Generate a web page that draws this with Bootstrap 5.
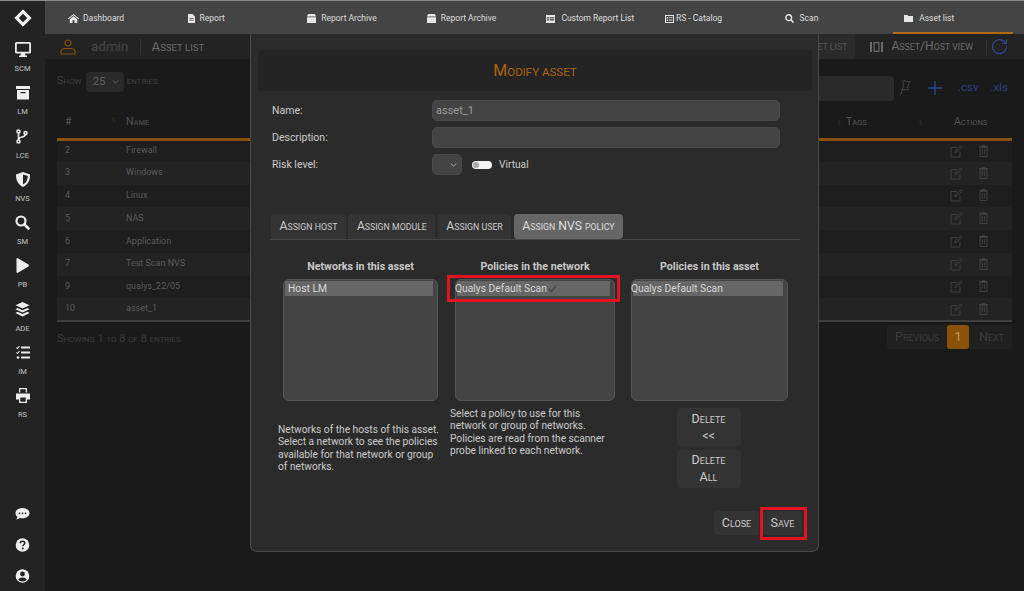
<!DOCTYPE html>
<html lang="en"><head><meta charset="utf-8"><title>Asset list</title>
<link href="https://cdn.jsdelivr.net/npm/bootstrap@5.3.0/dist/css/bootstrap.min.css" rel="stylesheet">
<style>
html,body{height:591px;overflow:hidden}
body{background:#1a1a1a;font-family:Roboto,"Liberation Sans",sans-serif;font-size:9px;color:#5a5a5a}
svg{display:block}
.sc{font-size:.72em;text-transform:uppercase}
.app{height:591px;position:relative;border-top:1px solid #8a8a8a}
.rail{width:45px;flex:none;background:#232323;color:#e8e8e8;height:590px;padding-top:2px}
.rail-logo{height:30px}
.rail-item{height:43.3px;font-size:7.5px;color:#c4c4c4;line-height:1;padding-top:9px;gap:8px;flex:none}
.rail-low{margin-top:auto;gap:11px;padding-bottom:5px}
.rail-low svg{width:15px;height:20px}
.topbar{height:33px;background:#444;display:grid;grid-template-columns:repeat(8,119.6px);padding-left:11px}
.tabitem{color:#dedede;font-size:8.5px;gap:6px;padding-left:12px;padding-top:4px;height:33px;border-bottom:2px solid transparent}
.tabitem.now{border-bottom-color:#b4690e}
.subbar{height:25px;background:#232323;padding:0 16px 0 15px}
.who{font-size:13.5px;color:#484848;margin-left:15px;padding-right:11px;border-right:1px solid #333;line-height:17px}
.crumb{font-size:13.3px;color:#6a6a6a;margin-left:11px}
.viewtab{margin-left:auto;background:#2a2a2a;height:25px;padding:0 8px;font-size:12.2px;color:#555}
.viewtab2{font-size:12.2px;color:#6b6b6b;gap:8px;margin-left:15px;padding-right:13px;border-right:1px solid #333;height:16px}
.pad{padding:0 12px}
.lenrow{height:53px;font-size:11px;color:#3f3f3f;gap:3px;padding-bottom:8px}
.lenbox{width:38px;height:20px;background:#2a2a2a;border-radius:4px;color:#5c5c5c;font-size:11.5px;padding:0 5px 0 7px;margin-left:1px}
.searchbar{margin-left:auto;color:#26417f;font-size:11.5px;padding-right:4px;margin-top:13px}
.fakeinput{width:90px;height:25px;background:#2a2a2a;border-radius:4px}
.grid-tbl{--bs-table-bg:transparent;--bs-table-color:#5a5a5a;--bs-table-striped-bg:#232323;--bs-table-striped-color:#5a5a5a;color:#5a5a5a;font-size:9px;margin:0;table-layout:fixed;width:955px;border-bottom:2px solid #3e3e3e}
.grid-tbl th{height:27px;padding:0 0 5px 8px;vertical-align:middle;font-weight:400;font-size:10.5px;color:#555;border-bottom:3px solid #8a5209;background:transparent;white-space:nowrap}
.grid-tbl td{height:22.75px;padding:0 0 0 8px;vertical-align:middle;border:0}
.grid-tbl tbody tr:nth-child(even) td{background:#232323}
.grid-tbl tbody tr:nth-child(odd) td{background:#1e1e1e}
.sortmark{display:inline-block;font-size:8px;color:#343434;letter-spacing:-3px;text-align:center}
.acts{gap:16px;color:#3f3f3f;margin-left:33px}
.foot{font-size:11px;color:#3a3a3a;padding-top:9px}
.pager{font-size:12.5px;color:#3c3c3c;background:#202020;height:24px;border-radius:3px;margin-top:3px;width:125px}
.pager span.lnk{padding:0 8px 0 8px;line-height:24px}
.pager .lnk.nx{padding-left:10px}
.pager .on{background:#8a5209;color:#c49a60;border-radius:3px;width:23px;text-align:center;line-height:24px;font-size:12px}
.dlg{position:absolute;left:250px;top:33px;width:569px;height:518px;background:#2b2b2b;border:1px solid #4a4a4a;border-top:0;border-radius:0 0 7px 7px;padding:16px 6px 0 7px;color:#ccc;font-size:10.5px}
.dlg-head{height:41px;background:#242424;border-radius:4px;color:#a8640f;font-size:16px;line-height:41px;text-align:center;margin-bottom:9px}
.frow{margin:0 0 6px 14px;height:21px}
.flabel{width:160px;flex:none;color:#ccc;font-size:10.5px}
.finput.form-control{width:348px;height:21px;min-height:0;padding:0 3px;background:#444;border:1px solid #4a4a4a;border-radius:5px;color:#999;font-size:11px;box-shadow:none}
.fsel{width:30px;height:21px;background:#444;border:1px solid #4a4a4a;border-radius:5px;padding-left:17px}
.sw{width:20px;height:8px;background:#f2f2f2;border-radius:4px;margin-left:10px;padding-left:1px}
.sw i{display:block;width:6px;height:6px;border-radius:50%;background:#aaa}
.virt{margin-left:7px;font-size:10.2px}
.dlg-tabs.nav-tabs{--bs-nav-tabs-border-color:#484848;--bs-nav-tabs-border-width:1px;margin:39px 12px 0 12px;padding-left:1px;gap:2.5px;border-bottom:1px solid #484848;height:26px;flex-wrap:nowrap}
.dlg-tabs .nav-link{background:#333;color:#ccc;border:0;border-radius:4px 4px 0 0;height:25px;padding:0 8.500px;line-height:25px;font-size:12.2px;margin:0;white-space:nowrap}
.dlg-tabs .nav-link.active{background:#666;color:#ddd;border-radius:4px}
.cols{margin:20px 0 0 0;display:grid;grid-template-columns:155px 160px 156px;column-gap:17px;padding-left:25px}
.coltitle{font-weight:700;font-size:10.7px;text-align:center;color:#c8c8c8;height:13px;line-height:13px;margin-bottom:6px;white-space:nowrap}
.lbox{height:122px;background:#444;border:1px solid #555;border-radius:6px;padding:1px;display:block}
.lbox .list-group-item{background:#666;border:0;border-radius:0;color:#d8d8d8;padding:0 3px;font-size:10.3px;line-height:15px;height:15px;margin-right:3px;white-space:nowrap}
.lbox .flush{padding-left:0;text-indent:-2px}
.tick{display:inline-block;vertical-align:-1px;margin-left:1px;text-indent:0}
.col3{margin-left:-1px}
.help{font-size:10.2px;line-height:12.3px;color:#ccc;white-space:nowrap}
.help1{margin:23px 0 0 -5px}
.help2{margin:7px 0 0 -5px}
.delbox{gap:4px;margin:7px 2px 0 0}
.gbtn.btn{background:#333;border:0;color:#ccc;font-size:12.5px;border-radius:4px;padding:0;line-height:15px;--bs-btn-hover-bg:#333;--bs-btn-hover-color:#ccc}
.delbtn{width:64px;height:38px}
.actrow{position:absolute;right:17px;bottom:16px;gap:4px}
.cl{width:45px;height:24px}
.sv{width:39px;height:24px;margin-right:-1px}
.redmark{position:absolute;border:3px solid #e0141e;pointer-events:none}
.rm1{left:196px;top:241px;width:173px;height:27px}
.rm2{left:509px;top:473px;width:47px;height:33px}
</style></head><body>
<svg width="0" height="0" style="position:absolute"><defs>
<symbol id="ed" viewBox="0 0 13 13"><path d="M10 6.500V12H1V2.500h6M5 7.500l.5-2L11 .8l1.300 1.300L6.800 7Z" fill="none" stroke="currentColor"/></symbol>
<symbol id="tr" viewBox="0 0 9 12"><path d="M1 2.500h7V11.500H1ZM0 1.500h9M3 1V.5h3V1M3.300 4v5.500M5.700 4v5.500" fill="none" stroke="currentColor"/></symbol>
</defs></svg>
<div class="app d-flex">
  <nav class="rail d-flex flex-column align-items-center">
    <div class="rail-logo d-flex align-items-center justify-content-center"><svg width="18" height="18" viewBox="0 0 18 18"><path d="M9 .8 17.200 9 9 17.200.8 9Z" fill="#f0f0f0" stroke="#f0f0f0" stroke-linejoin="round"/><path d="M9 4.800 13.200 9 9 13.200 4.800 9Z" fill="#232323"/></svg></div>
    <div class="rail-item d-flex flex-column align-items-center"><svg width="16" height="15" viewBox="0 0 16 15"><path d="M1.500 0h13A1.500 1.500 0 0 1 16 1.500v8.500a1.500 1.500 0 0 1-1.500 1.500H10l.5 2H12v1.500H4V13.500h1.500l.5-2H1.500A1.500 1.500 0 0 1 0 10V1.500A1.500 1.500 0 0 1 1.500 0Zm.3 1.800v7.900h12.400V1.800Z" fill="#eee" fill-rule="evenodd"/></svg><span>SCM</span></div>
    <div class="rail-item d-flex flex-column align-items-center"><svg width="14" height="15" viewBox="0 0 14 15"><path d="M0 1h14v3H0ZM1 5h12v9.500H1Zm3.500 2v1.300h5V7Z" fill="#eee" fill-rule="evenodd"/></svg><span>LM</span></div>
    <div class="rail-item d-flex flex-column align-items-center"><svg width="12" height="15" viewBox="0 0 12 15"><g fill="none" stroke="#eee" stroke-width="1.600"><circle cx="2.500" cy="2.500" r="1.500"/><circle cx="2.500" cy="12.500" r="1.500"/><circle cx="9.500" cy="4" r="1.500"/><path d="M2.500 4v7M9.500 5.500c0 3-7 2-7 5"/></g></svg><span>LCE</span></div>
    <div class="rail-item d-flex flex-column align-items-center"><svg width="14" height="15" viewBox="0 0 14 15"><path d="M7 0 14 2.500c0 6-2 10-7 12.500C2 12.500 0 8.500 0 2.500Z" fill="#eee"/><path d="M7 2.400 11.800 4c-.2 4-1.400 6.800-4.800 8.600Z" fill="#232323"/></svg><span>NVS</span></div>
    <div class="rail-item d-flex flex-column align-items-center"><svg width="15" height="15" viewBox="0 0 15 15"><circle cx="6" cy="6" r="4.500" fill="none" stroke="#eee" stroke-width="2.200"/><path d="m9.500 9.500 4 4" stroke="#eee" stroke-width="2.600" stroke-linecap="round"/></svg><span>SM</span></div>
    <div class="rail-item d-flex flex-column align-items-center"><svg width="13" height="15" viewBox="0 0 13 15"><path d="M.5 1v13c0 .8.700 1.100 1.300.8L12.500 8.400c.6-.4.600-1.400 0-1.800L1.800.2C1.200-.1.500.2.500 1Z" fill="#eee"/></svg><span>PB</span></div>
    <div class="rail-item d-flex flex-column align-items-center"><svg width="15" height="15" viewBox="0 0 15 15"><path d="M7.500 0 14.500 3.300 7.500 6.600.5 3.300Z" fill="#eee"/><path d="M2.500 6 7.500 8.300 12.500 6l2 1.200-7 3.300-7-3.300ZM2.500 9.800l5 2.300 5-2.300 2 1.200-7 3.500-7-3.500Z" fill="#eee"/></svg><span>ADE</span></div>
    <div class="rail-item d-flex flex-column align-items-center"><svg width="14" height="15" viewBox="0 0 14 15"><path d="M5 2.500h9M5 7.500h9M5 12.500h9" stroke="#eee" stroke-width="2"/><path d="m.5 2.500 1 1L3.500 1M.5 7.500l1 1 2-2.500" stroke="#eee" stroke-width="1.100" fill="none"/><circle cx="2" cy="12.500" r="1.300" fill="#eee"/></svg><span>IM</span></div>
    <div class="rail-item d-flex flex-column align-items-center"><svg width="14" height="15" viewBox="0 0 14 15"><path d="M3 0h8v4.500H9.800V1.300H4.200v3.200H3ZM0 5.500h14v6h-3v3.500H3v-3.500H0Zm4.300 4v4.200h5.400V9.500Z" fill="#eee" fill-rule="evenodd"/></svg><span>RS</span></div>
    <div class="rail-low d-flex flex-column align-items-center">
      <svg viewBox="0 0 15 20"><path d="M7.500 4C3.400 4 .5 6.300.5 9.200c0 1.500.8 2.800 2 3.700-.2 1-.8 1.700-1.500 2.300 1.400 0 2.900-.6 3.800-1.300.8.200 1.700.3 2.700.3 4.100 0 7-2.200 7-5S11.600 4 7.500 4Z" fill="#eee"/><circle cx="4.500" cy="9.300" r=".9" fill="#232323"/><circle cx="7.500" cy="9.300" r=".9" fill="#232323"/><circle cx="10.500" cy="9.300" r=".9" fill="#232323"/></svg>
      <svg viewBox="0 0 15 20"><circle cx="7.500" cy="10" r="6.800" fill="#eee"/><path d="M5.300 8.200c0-1.300 1-2 2.300-2s2.200.8 2.200 1.900c0 1.700-2 1.600-2 3.200" fill="none" stroke="#232323" stroke-width="1.500"/><circle cx="7.700" cy="13.500" r="1" fill="#232323"/></svg>
      <svg viewBox="0 0 15 20"><circle cx="7.500" cy="10" r="6.800" fill="#eee"/><circle cx="7.500" cy="8" r="2.400" fill="#232323"/><path d="M3.300 13.800c.7-1.600 2.300-2.400 4.200-2.400s3.500.8 4.200 2.400c-1 1-2.500 1.700-4.200 1.700s-3.200-.7-4.200-1.700Z" fill="#232323"/></svg>
    </div>
  </nav>
  <main class="flex-grow-1 d-flex flex-column" style="min-width:0">
    <div class="topbar">
      <div class="tabitem d-flex align-items-center" style="gap:4px"><svg width="11" height="9" viewBox="0 0 11 9"><path d="M5.500 0 11 4.600l-.6.700L5.500 1.300.6 5.300 0 4.600ZM1.800 5.200 5.500 2.200l3.700 3V9H6.500V6.300h-2V9H1.800Z" fill="#e6e6e6"/></svg>Dashboard</div>
      <div class="tabitem d-flex align-items-center" style="gap:5px"><svg width="7" height="9" viewBox="0 0 7 9"><path d="M0 0h4.500L7 2.500V9H0Zm1.500 4v.8h4V4Zm0 1.800v.8h4v-.8Z" fill="#e6e6e6" fill-rule="evenodd"/></svg>Report</div>
      <div class="tabitem d-flex align-items-center" style="gap:5px"><svg width="9" height="9" viewBox="0 0 9 9"><path d="M1 0h7l1 2.500H0ZM0 3.200h9V9H0Z" fill="#e6e6e6"/></svg>Report Archive</div>
      <div class="tabitem d-flex align-items-center" style="gap:5px"><svg width="9" height="9" viewBox="0 0 9 9"><path d="M1 0h7l1 2.500H0ZM0 3.200h9V9H0Z" fill="#e6e6e6"/></svg>Report Archive</div>
      <div class="tabitem d-flex align-items-center"><svg width="9" height="8" viewBox="0 0 9 8"><path d="M0 0h9v8H0Zm.8 2.300v1.200h2.300V2.300Zm3 0v1.200h4.400V2.300ZM.8 4.300v1.200h2.300V4.300Zm3 0v1.200h4.400V4.300Z" fill="#e6e6e6" fill-rule="evenodd"/></svg>Custom Report List</div>
      <div class="tabitem d-flex align-items-center" style="gap:2px;padding-left:11px"><svg width="9" height="8" viewBox="0 0 9 8"><path d="M0 0h9v8H0Zm1 1v6h7V1Zm.6 1h1.600v1.600H1.600Zm2.400.2h3.400V3H4ZM1.600 4.400h1.600V6H1.600Zm2.400.2h3.400v.8H4Z" fill="#e6e6e6" fill-rule="evenodd"/></svg>RS - Catalog</div>
      <div class="tabitem d-flex align-items-center" style="padding-left:11px"><svg width="9" height="9" viewBox="0 0 9 9"><circle cx="3.700" cy="3.700" r="2.900" fill="none" stroke="#e6e6e6" stroke-width="1.400"/><path d="m6 6 2.500 2.500" stroke="#e6e6e6" stroke-width="1.600"/></svg>Scan</div>
      <div class="tabitem now d-flex align-items-center" style="padding-left:11px"><svg width="9" height="7" viewBox="0 0 9 7"><path d="M0 0h3.400l1 1H9v6H0Z" fill="#e6e6e6"/></svg>Asset list</div>
    </div>
    <div class="subbar d-flex align-items-center">
      <svg width="16" height="16" viewBox="0 0 16 16"><g fill="none" stroke="#8a5209" stroke-width="1.200"><circle cx="8" cy="4" r="3"/><path d="M1 15v-2c0-2 2-3.500 4-3.500h6c2 0 4 1.500 4 3.500v2Z"/></g></svg>
      <span class="who">admin</span><span class="crumb">A<span class="sc">sset list</span></span>
      <span class="viewtab d-flex align-items-center"><span>A<span class="sc">sset list</span></span></span>
      <span class="viewtab2 d-flex align-items-center"><svg width="13" height="10" viewBox="0 0 13 10"><path d="M0 0h2v10H0ZM3.500 0h6v10h-6Zm1.200 1.200v7.600h3.600V1.200ZM11 0h2v10h-2Z" fill="#6b6b6b" fill-rule="evenodd"/></svg><span>A<span class="sc">sset</span>/H<span class="sc">ost view</span></span></span>
      <svg class="ms-1" width="17" height="17" viewBox="0 0 17 17"><path d="M14.500 5A7 7 0 1 0 15.500 9" fill="none" stroke="#2a4a8a" stroke-width="1.200"/><path d="M15.500 1v4.500H11" fill="none" stroke="#2a4a8a" stroke-width="1.200"/></svg>
    </div>
    <div class="pad">
      <div class="lenrow d-flex align-items-center">
        <span>S<span class="sc">how</span></span>
        <span class="lenbox d-flex align-items-center justify-content-between">25<svg width="7" height="4" viewBox="0 0 7 4"><path d="m.8.500 2.700 2.700L6.200.500" fill="none" stroke="#666" stroke-width="1"/></svg></span>
        <span class="sc">entries</span>
        <span class="searchbar d-flex align-items-center">
          <span class="fakeinput"></span>
          <svg width="14" height="18" style="margin-left:4px" viewBox="0 0 14 18"><path d="M5 1.500 12.500 3 10.500 4.500 9.500 9.500 11 11 3.500 10.500 5 9 5.500 4 4 2.500Z M4.500 11 2 16.500" fill="none" stroke="#444" stroke-width="1"/></svg>
          <svg width="14" height="14" style="margin-left:16px" viewBox="0 0 14 14"><path d="M7 0v14M0 7h14" stroke="#26479a" stroke-width="1.300"/></svg>
          <span style="margin-left:16px">.csv</span><span style="margin-left:12px">.xls</span>
        </span>
      </div>
      <table class="table grid-tbl">
        <colgroup><col style="width:69px"><col style="width:703px"><col style="width:88px"><col></colgroup>
        <thead><tr><th>#<span class="sortmark float-end" style="padding-right:13px">↑↓</span></th><th style="padding-left:0">N<span class="sc">ame</span></th><th class="ps-0"><span class="sortmark" style="width:17px">↑↓</span>T<span class="sc">ags</span></th><th class="ps-0"><span class="sortmark" style="width:37px;text-align:left;padding-left:1px">↑↓</span>A<span class="sc">ctions</span></th></tr></thead>
        <tbody>
          <tr><td>2</td><td class="ps-0">Firewall</td><td></td><td class="p-0"><div class="acts d-flex"><svg width="13" height="13"><use href="#ed"/></svg><svg width="9" height="12"><use href="#tr"/></svg></div></td></tr>
          <tr><td>3</td><td class="ps-0">Windows</td><td></td><td class="p-0"><div class="acts d-flex"><svg width="13" height="13"><use href="#ed"/></svg><svg width="9" height="12"><use href="#tr"/></svg></div></td></tr>
          <tr><td>4</td><td class="ps-0">Linux</td><td></td><td class="p-0"><div class="acts d-flex"><svg width="13" height="13"><use href="#ed"/></svg><svg width="9" height="12"><use href="#tr"/></svg></div></td></tr>
          <tr><td>5</td><td class="ps-0">NAS</td><td></td><td class="p-0"><div class="acts d-flex"><svg width="13" height="13"><use href="#ed"/></svg><svg width="9" height="12"><use href="#tr"/></svg></div></td></tr>
          <tr><td>6</td><td class="ps-0">Application</td><td></td><td class="p-0"><div class="acts d-flex"><svg width="13" height="13"><use href="#ed"/></svg><svg width="9" height="12"><use href="#tr"/></svg></div></td></tr>
          <tr><td>7</td><td class="ps-0">Test Scan NVS</td><td></td><td class="p-0"><div class="acts d-flex"><svg width="13" height="13"><use href="#ed"/></svg><svg width="9" height="12"><use href="#tr"/></svg></div></td></tr>
          <tr><td>9</td><td class="ps-0">qualys_22/05</td><td></td><td class="p-0"><div class="acts d-flex"><svg width="13" height="13"><use href="#ed"/></svg><svg width="9" height="12"><use href="#tr"/></svg></div></td></tr>
          <tr><td>10</td><td class="ps-0">asset_1</td><td></td><td class="p-0"><div class="acts d-flex"><svg width="13" height="13"><use href="#ed"/></svg><svg width="9" height="12"><use href="#tr"/></svg></div></td></tr>
        </tbody>
      </table>
      <div class="d-flex justify-content-between align-items-start">
        <div class="foot">S<span class="sc">howing</span> 1 <span class="sc">to</span> 8 <span class="sc">of</span> 8 <span class="sc">entries</span></div>
        <div class="pager d-flex justify-content-end"><span class="lnk">P<span class="sc">revious</span></span><span class="on">1</span><span class="lnk nx">N<span class="sc">ext</span></span></div>
      </div>
    </div>
  </main>
  <section class="dlg">
    <div class="dlg-head">M<span class="sc">odify asset</span></div>
    <div class="frow d-flex align-items-center"><label class="flabel">Name:</label><input class="form-control finput" value="asset_1"></div>
    <div class="frow d-flex align-items-center"><label class="flabel">Description:</label><input class="form-control finput"></div>
    <div class="frow d-flex align-items-center"><label class="flabel">Risk level:</label><span class="fsel d-flex align-items-center"><svg width="7" height="4" viewBox="0 0 7 4"><path d="m.8.500 2.700 2.700L6.200.500" fill="none" stroke="#aaa"/></svg></span><span class="sw d-flex align-items-center"><i></i></span><span class="virt">Virtual</span></div>
    <ul class="nav nav-tabs dlg-tabs">
      <li class="nav-item"><a class="nav-link" href="#">A<span class="sc">ssign host</span></a></li>
      <li class="nav-item"><a class="nav-link" href="#">A<span class="sc">ssign module</span></a></li>
      <li class="nav-item"><a class="nav-link" href="#">A<span class="sc">ssign user</span></a></li>
      <li class="nav-item"><a class="nav-link active" href="#">A<span class="sc">ssign</span> NVS <span class="sc">policy</span></a></li>
    </ul>
    <div class="cols">
      <div>
        <div class="coltitle">Networks in this asset</div>
        <div class="list-group lbox"><div class="list-group-item">Host LM</div></div>
        <div class="help help1">Networks of the hosts of this asset.<br>Select a network to see the policies<br>available for that network or group<br>of networks.</div>
      </div>
      <div>
        <div class="coltitle">Policies in the network</div>
        <div class="list-group lbox"><div class="list-group-item flush">Qualys Default Scan<svg class="tick" width="9" height="8" viewBox="0 0 9 8"><path d="m1 4 2.300 2.500L8 1" fill="none" stroke="#4a4a4a" stroke-width="1.500"/></svg></div></div>
        <div class="help help2">Select a policy to use for this<br>network or group of networks.<br>Policies are read from the scanner<br>probe linked to each network.</div>
      </div>
      <div class="col3">
        <div class="coltitle">Policies in this asset</div>
        <div class="list-group lbox"><div class="list-group-item flush">Qualys Default Scan</div></div>
        <div class="delbox d-flex flex-column align-items-center">
          <button class="btn gbtn delbtn">D<span class="sc">elete</span><br>&lt;&lt;</button>
          <button class="btn gbtn delbtn">D<span class="sc">elete</span><br>A<span class="sc">ll</span></button>
        </div>
      </div>
    </div>
    <div class="actrow d-flex"><button class="btn gbtn cl">C<span class="sc">lose</span></button><button class="btn gbtn sv">S<span class="sc">ave</span></button></div>
    <div class="redmark rm1"></div>
    <div class="redmark rm2"></div>
  </section>
</div>
<script src="https://cdn.jsdelivr.net/npm/bootstrap@5.3.0/dist/js/bootstrap.bundle.min.js"></script>
</body></html>
